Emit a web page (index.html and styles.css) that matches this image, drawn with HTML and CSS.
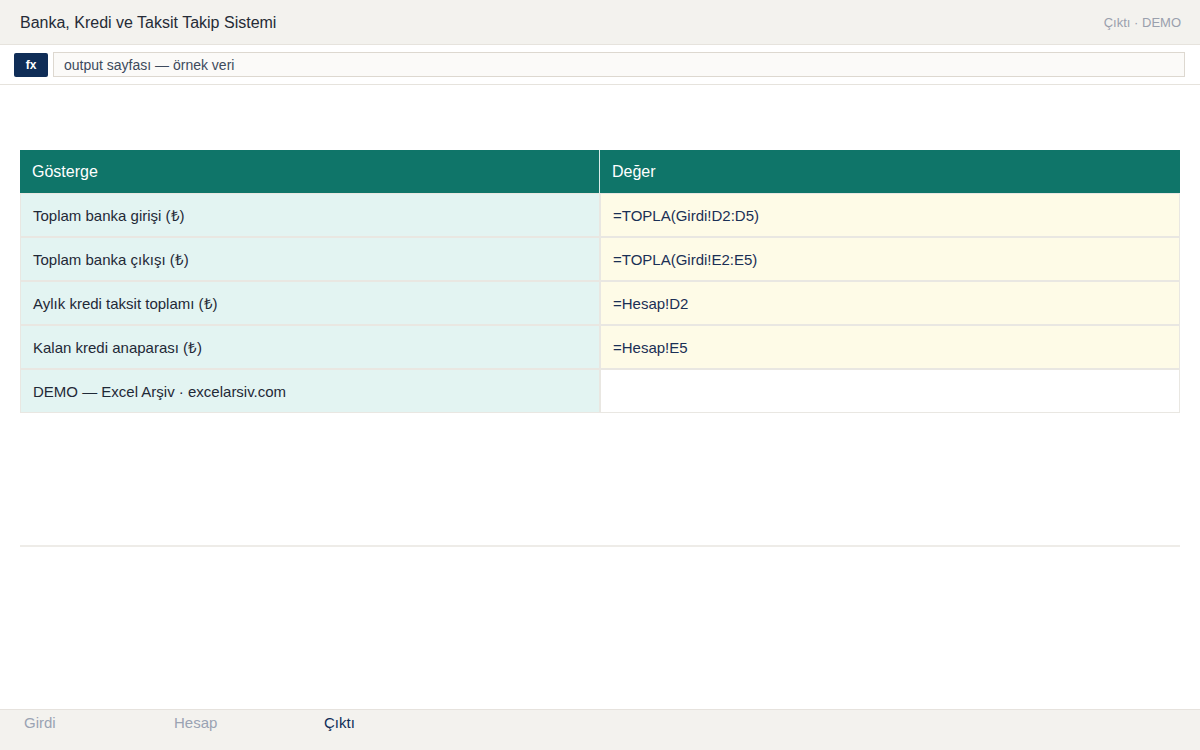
FILE: index.html
```html
<!DOCTYPE html>
<html lang="tr">
<head>
<meta charset="utf-8">
<title>Banka, Kredi ve Taksit Takip Sistemi</title>
<link rel="stylesheet" href="styles.css">
</head>
<body>
<div class="app">
  <header class="topbar">
    <div class="title">Banka, Kredi ve Taksit Takip Sistemi</div>
    <div class="crumb">Çıktı · DEMO</div>
  </header>
  <div class="fbar">
    <span class="fx">fx</span>
    <div class="finput">output sayfası — örnek veri</div>
  </div>
  <main class="sheet">
    <table class="grid">
      <thead>
        <tr><th>Gösterge</th><th>Değer</th></tr>
      </thead>
      <tbody>
        <tr><td class="lab">Toplam banka girişi (₺)</td><td class="val">=TOPLA(Girdi!D2:D5)</td></tr>
        <tr><td class="lab">Toplam banka çıkışı (₺)</td><td class="val">=TOPLA(Girdi!E2:E5)</td></tr>
        <tr><td class="lab">Aylık kredi taksit toplamı (₺)</td><td class="val">=Hesap!D2</td></tr>
        <tr><td class="lab">Kalan kredi anaparası (₺)</td><td class="val">=Hesap!E5</td></tr>
        <tr><td class="lab">DEMO — Excel Arşiv · excelarsiv.com</td><td class="empty"></td></tr>
      </tbody>
    </table>
    <hr class="rule">
  </main>
  <nav class="tabs">
    <span class="tab">Girdi</span>
    <span class="tab">Hesap</span>
    <span class="tab active">Çıktı</span>
  </nav>
</div>
</body>
</html>
```

FILE: styles.css
```css
* { box-sizing: border-box; }
html, body { margin: 0; padding: 0; }
body {
  font-family: "Liberation Sans", Arial, sans-serif;
  background: #ffffff;
  color: #1f2937;
}
.app {
  height: 750px;
  display: flex;
  flex-direction: column;
}
.topbar {
  height: 45px;
  flex: none;
  background: #f3f2ee;
  border-bottom: 1px solid #e6e3dd;
  display: flex;
  align-items: center;
  justify-content: space-between;
  padding: 1px 19px 0 20px;
}
.title {
  font-size: 16px;
  color: #252b36;
}
.crumb {
  font-size: 13px;
  color: #9aa0ad;
}
.fbar {
  height: 40px;
  flex: none;
  border-bottom: 1px solid #e6e3dd;
  display: flex;
  align-items: center;
  gap: 5px;
  padding: 0 15px 0 14px;
}
.fx {
  width: 34px;
  height: 24px;
  background: #0f2d57;
  color: #ffffff;
  border-radius: 2px;
  font-size: 12px;
  font-weight: bold;
  display: flex;
  align-items: center;
  justify-content: center;
}
.finput {
  flex: 1;
  height: 25px;
  background: #fbfaf8;
  border: 1px solid #ddd8d0;
  font-size: 14px;
  color: #3d4a5c;
  display: flex;
  align-items: center;
  padding: 0 10px;
}
.sheet {
  flex: 1;
  padding: 65px 20px 0 20px;
}
.grid {
  width: 1160px;
  border-collapse: separate;
  border-spacing: 0;
  font-size: 15px;
}
.grid th {
  background: #0f7569;
  color: #ffffff;
  font-size: 16px;
  font-weight: 500;
  text-align: left;
  height: 43px;
  padding: 0 12px;
  width: 50%;
}
.grid th:first-child {
  border-right: 1px solid #d9ece9;
}
.grid td {
  height: 44px;
  padding: 0 12px;
  border: 1px solid #e9e7e2;
}
.grid .lab {
  background: #e3f4f2;
  color: #1f2937;
}
.grid .val {
  background: #fefbe7;
  color: #1a2f55;
}
.grid .empty {
  background: #ffffff;
}
.rule {
  margin: 132px 0 0 0;
  border: 0;
  border-top: 2px solid #eeece8;
  height: 0;
}
.tabs {
  height: 41px;
  flex: none;
  background: #f3f2ee;
  border-top: 1px solid #e6e2dd;
  display: flex;
  padding: 4px 0 0 24px;
}
.tab {
  width: 150px;
  font-size: 15px;
  color: #9aa3b3;
}
.tab.active {
  color: #0f2d57;
}
```
